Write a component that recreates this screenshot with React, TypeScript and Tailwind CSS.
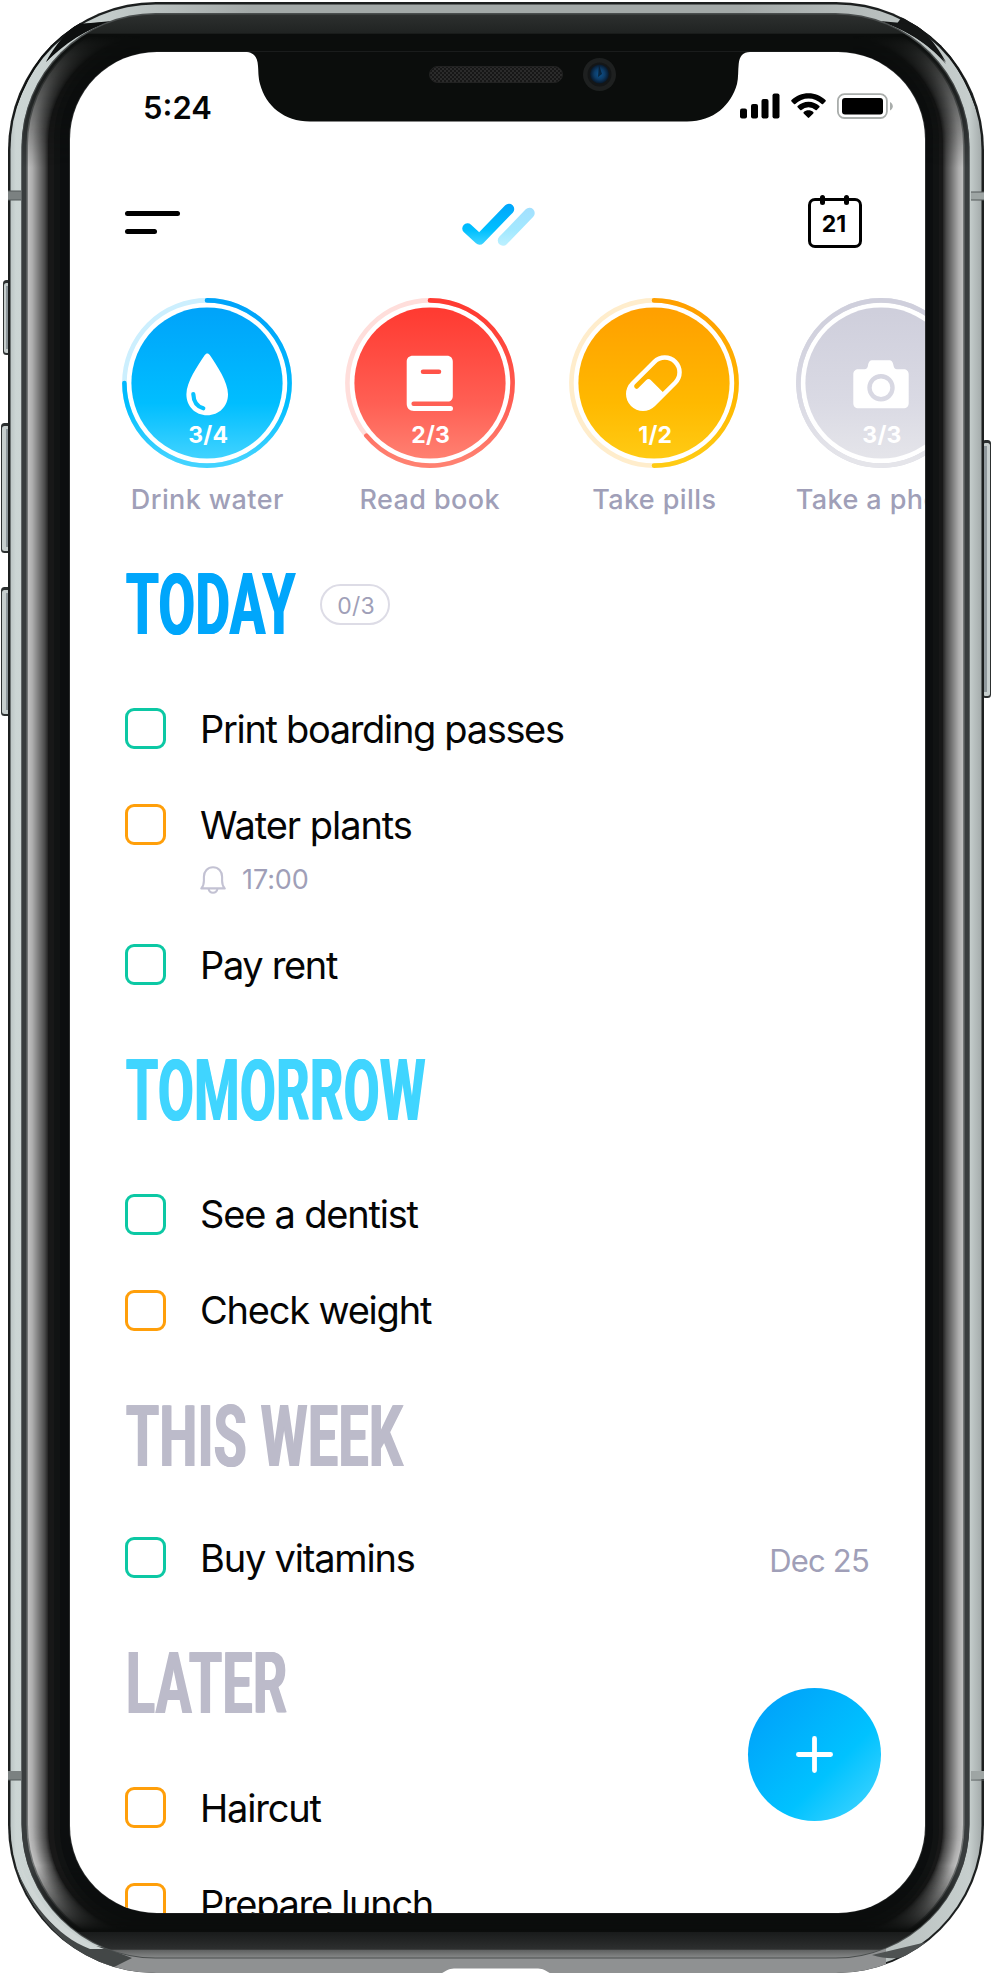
import React from "react";

type HabitProps = {
  id: string;
  label: string;
  count: string;
  progress: number;
  stops: [string, string, string];
  track: string;
  children: React.ReactNode;
};

function arc(progress: number) {
  const r = 82.6;
  const a = Math.min(progress, 0.9999) * 2 * Math.PI;
  const x = 85 + r * Math.sin(a);
  const y = 85 - r * Math.cos(a);
  return `M85 ${85 - r}A${r} ${r} 0 ${progress > 0.5 ? 1 : 0} 1 ${x} ${y}`;
}

function Habit({ id, label, count, progress, stops, track, children }: HabitProps) {
  return (
    <div className="flex w-[170px] shrink-0 flex-col items-center">
      <div className="relative flex h-[170px] w-[170px] items-end justify-center pb-[19px]">
        <svg className="absolute inset-0" width="170" height="170" viewBox="0 0 170 170" fill="none">
          <defs>
            <linearGradient id={id} gradientUnits="userSpaceOnUse" x1="0" y1="0" x2="0" y2="170">
              <stop offset="0.08" stopColor={stops[0]} />
              <stop offset="0.62" stopColor={stops[1]} />
              <stop offset="0.95" stopColor={stops[2]} />
            </linearGradient>
          </defs>
          <circle cx="85" cy="85" r="82.6" stroke={track} strokeWidth="4.6" />
          <path d={arc(progress)} stroke={`url(#${id})`} strokeWidth="4.6" strokeLinecap="round" />
          <circle cx="85" cy="85" r="75.6" fill={`url(#${id})`} />
          {children}
        </svg>
        <span className="relative left-[1px] text-[23px] leading-[28px] font-bold tracking-[0.2px] text-white">{count}</span>
      </div>
      <span className="mt-[14px] text-[27px] leading-[36px] font-medium tracking-[0.4px] whitespace-nowrap text-[#a09fb8]">
        {label}
      </span>
    </div>
  );
}

function Heading({ text, className, children }: { text: string; className: string; children?: React.ReactNode }) {
  return (
    <div className="flex items-start">
      <h2
        className={
          "ml-[1px] h-[61px] origin-left font-['Roboto'] text-[86px] leading-[63px] font-bold tracking-[0.8px] whitespace-nowrap [text-shadow:1.2px_0_0_currentColor,-1.2px_0_0_currentColor] " +
          className
        }
      >
        {text}
      </h2>
      {children}
    </div>
  );
}

function Task({
  text,
  color,
  className = "h-[96px]",
  tracking = "tracking-[-1.2px]",
  date,
  time,
}: {
  text: string;
  color: string;
  className?: string;
  tracking?: string;
  date?: string;
  time?: string;
}) {
  return (
    <li className={"flex items-start " + className}>
      <span className={"h-[41px] w-[41px] shrink-0 rounded-[9px] border-[3px] " + color} />
      <div className="ml-[34px] flex-1">
        <div className="flex h-[41px] items-center justify-between">
          <span className={"mt-[1px] text-[38px] leading-[41px] whitespace-nowrap text-[#050505] " + tracking}>{text}</span>
          {date && <span className="mt-[6px] mr-[56px] text-[31px] leading-[36px] tracking-[-0.8px] text-[#a09fb8]">{date}</span>}
        </div>
        {time && (
          <div className="mt-[19px] flex items-center gap-[16px] text-[27px] leading-[32px] text-[#a09fb8]">
            <svg width="26" height="28" viewBox="0 0 26 28" fill="none" stroke="#c3c2d3" strokeWidth="2.1" strokeLinejoin="round">
              <path d="M1.3 22.4c1.8-1.9 2.6-4 2.6-7.600v-4C3.900 5.100 7.600 1.300 13 1.300s9.100 3.800 9.100 9.500v4c0 3.600.8 5.700 2.600 7.600z" />
              <path d="M8.600 22.800c.4 2.400 2.100 3.900 4.400 3.900s4-1.500 4.400-3.900" />
            </svg>
            <span className="tracking-[-0.1px]">{time}</span>
          </div>
        )}
      </div>
    </li>
  );
}

const GREEN = "border-[#0cc8a4]";
const ORANGE = "border-[#ff9f0a]";

function mix(t: number) {
  const pts: [number, number][] = [
    [0, 190],
    [0.2, 172],
    [0.5, 124],
    [0.8, 76],
    [0.95, 42],
    [1, 24],
  ];
  for (let i = 1; i < pts.length; i++) {
    if (t <= pts[i][0]) {
      const k = (t - pts[i - 1][0]) / (pts[i][0] - pts[i - 1][0]);
      const v = Math.round(pts[i - 1][1] + k * (pts[i][1] - pts[i - 1][1]));
      return `rgb(${v},${v},${v})`;
    }
  }
  return "rgb(24,26,25)";
}

function SideButton({ x, y, w, h, flip }: { x: number; y: number; w: number; h: number; flip?: boolean }) {
  return (
    <g>
      <rect x={x} y={y} width={w} height={h} rx="3.500" fill="#2c3030" />
      <rect x={x + 1} y={y + 3} width={w - 2} height={h - 5} rx="2.500" fill="#c6cecd" />
      <rect x={flip ? x : x + w - 5} y={y + 6} width="5" height={h - 12} fill="#8f989c" />
    </g>
  );
}

function Device() {
  const steps = Array.from({ length: 21 }, (_, i) => i);
  return (
    <svg className="absolute inset-0" width="993" height="1974" viewBox="0 0 993 1974" fill="none" aria-hidden="true">
      <defs>
        <linearGradient id="rim" gradientUnits="userSpaceOnUse" x1="8" y1="0" x2="984" y2="0">
          <stop offset="0" stopColor="#b4bdbd" />
          <stop offset="0.008" stopColor="#ccd5d4" />
          <stop offset="0.1" stopColor="#c4cccb" />
          <stop offset="0.25" stopColor="#a3a9a8" />
          <stop offset="0.75" stopColor="#a3a9a8" />
          <stop offset="0.985" stopColor="#c6cecd" />
          <stop offset="1" stopColor="#9da4a4" />
        </linearGradient>
        <linearGradient id="glass" gradientUnits="userSpaceOnUse" x1="0" y1="14" x2="0" y2="1958">
          <stop offset="0" stopColor="#2d302f" />
          <stop offset="0.0100" stopColor="#202322" />
          <stop offset="0.0101" stopColor="#0b0d0c" />
          <stop offset="0.9865" stopColor="#0b0d0c" />
          <stop offset="0.9866" stopColor="#191b1b" />
          <stop offset="0.9955" stopColor="#2d2f2f" />
          <stop offset="0.996" stopColor="#606262" />
          <stop offset="1" stopColor="#888a8a" />
        </linearGradient>
        <linearGradient id="fade" gradientUnits="userSpaceOnUse" x1="0" y1="0" x2="0" y2="1974">
          <stop offset="0.018" stopColor="#000" />
          <stop offset="0.045" stopColor="#666" />
          <stop offset="0.085" stopColor="#fff" />
          <stop offset="0.945" stopColor="#fff" />
          <stop offset="0.978" stopColor="#000" />
        </linearGradient>
        <mask id="sides" maskUnits="userSpaceOnUse" x="0" y="0" width="993" height="1974">
          <rect width="993" height="1974" fill="url(#fade)" />
        </mask>
        <clipPath id="body">
          <rect x="8" y="2" width="976" height="1971" rx="148" />
        </clipPath>
        <radialGradient id="lens" cx="0.5" cy="0.5" r="0.5">
          <stop offset="0" stopColor="#0e5590" />
          <stop offset="0.55" stopColor="#0d3c68" />
          <stop offset="1" stopColor="#08182a" />
        </radialGradient>
        <pattern id="mesh" width="4" height="4" patternUnits="userSpaceOnUse">
          <rect width="4" height="4" fill="#2b2b2b" />
          <path d="M0 0h2v2H0zM2 2h2v2H2z" fill="#171717" />
        </pattern>
      </defs>
      <SideButton x={3} y={280} w={8} h={75} />
      <SideButton x={1} y={423} w={10} h={130} />
      <SideButton x={1} y={587} w={10} h={129} />
      <SideButton x={982} y={440} w={9} h={258} flip />
      <rect x="8" y="2" width="976" height="1971" rx="148" fill="#1c1f1f" />
      <rect x="10.500" y="4.500" width="971" height="1966.500" rx="145" fill="url(#rim)" />
      <g clipPath="url(#body)">
        <path d="M106 1940H886V1974H100z" fill="#8f9192" />
        <path d="M14 1862C32 1910 62 1943 103 1947L132 1958L112 1968C70 1955 30 1915 14 1862z" fill="#434747" />
        <path d="M19 1862C36 1904 66 1936 104 1949L90 1949C56 1936 30 1904 19 1862z" fill="#cfd6d5" />
        <path d="M872 1955L935 1940C912 1958 896 1962 872 1955z" fill="#4e5252" />
        <path d="M12 122C24 72 50 36 88 14L80 24L110 22C84 30 62 44 46 62C58 44 64 40 68 32C44 50 24 80 12 122z" fill="#0d0f0f" />
        <path d="M46 62C58 40 74 24 84 18L80 24L112 21C86 29 64 44 46 62z" fill="#0d0f0f" />
        <path d="M980 122C968 72 942 36 904 14L896 25L882 22C912 32 932 48 946 64C936 48 928 40 924 32C948 50 968 80 980 122z" fill="#141616" />
        <path d="M946 62C934 40 918 24 908 18L912 24L880 21C906 29 928 44 946 62z" fill="#141616" />
      </g>
      <rect x="21.500" y="13" width="948" height="1945.500" rx="134" fill="#4a4e4e" />
      <rect x="22.500" y="14.500" width="946" height="1943" rx="133" fill="url(#glass)" />
      <g mask="url(#sides)">
        <rect x="21.500" y="13" width="948" height="1945" rx="134" fill="#393d3e" />
        <rect x="26.500" y="17" width="938" height="1936" rx="128" fill="#747777" />
        {steps.map((s) => (
          <rect
            key={s}
            x={28 + s}
            y={18 + s * 0.85}
            width={935 - 2 * s}
            height={1934 - 1.7 * s}
            rx={127 - s}
            fill={mix(s / 20)}
          />
        ))}
        <rect x="54" y="38" width="885" height="1892" rx="101" fill="#111313" />
        <rect x="60" y="44" width="873" height="1880" rx="95" fill="#0c0e0f" />
      </g>
      <rect x="140" y="34" width="713" height="18" fill="#0b0d0c" />
      <path d="M8 191h13v9H8zM8 1771h13v9H8z" fill="#7b8181" />
      <path d="M971 192h13v8H971zM971 1771h13v8H971z" fill="#9ea5a4" />
      <path d="M8 191h13M8 200h13M971 192h13M971 200h13M8 1780h13M971 1780h13" stroke="#555b5b" />
      <path d="M436 1974C446 1974 444 1968.500 456 1968.500H536C548 1968.500 546 1974 556 1974z" fill="#fff" />
      <rect x="69" y="51.500" width="857" height="1862" rx="88" fill="#2a2c2c" />
    </svg>
  );
}

function Notch() {
  return (
    <svg className="absolute top-0 left-[172px]" width="510" height="70" viewBox="242 52 510 70" fill="none" aria-hidden="true">
      <path
        d="M242 52H245C254 52 257.500 57 258 66C258.500 71 258 76 260 84C266 106 284 121.500 310 121.500H687C714 121.500 731 105 737 84C738.500 78 738 70 738.700 64C739.500 56 743 52 750 52z"
        fill="#0b0d0c"
      />
      <rect x="429.500" y="66.500" width="133" height="16" rx="8" fill="url(#mesh)" stroke="#222" />
      <circle cx="599.500" cy="74.500" r="16.500" fill="#1e2020" />
      <circle cx="599.500" cy="74.500" r="12" fill="#141617" />
      <circle cx="599.500" cy="74" r="9.500" fill="url(#lens)" />
      <path d="M599 65l3 9-4 3z" fill="#071523" opacity="0.7" />
    </svg>
  );
}

export default function App() {
  return (
    <div className="relative h-[1974px] w-[993px] overflow-hidden bg-white pt-[52px] pl-[70px] font-['Inter','Liberation_Sans',sans-serif]">
      <Device />
      <main className="relative flex h-[1861px] w-[855px] flex-col overflow-hidden rounded-[87px] bg-white">
        <Notch />
        <div className="flex h-[108px] shrink-0 items-center justify-between pr-[32px] pl-[73px]">
          <span className="mt-[3px] text-[31px] leading-[36px] font-semibold text-[#050505]">5:24</span>
          <div className="flex items-center">
            <svg width="40" height="26" viewBox="0 0 40 26" fill="#000">
              <rect x="0" y="15.500" width="7" height="10" rx="2" />
              <rect x="11" y="11" width="7" height="14.500" rx="2" />
              <rect x="21.500" y="6" width="7" height="19.500" rx="2" />
              <rect x="32.500" y="0.500" width="7" height="25" rx="2" />
            </svg>
            <svg className="ml-[11px]" width="35" height="26" viewBox="0 0 35 26" fill="#000">
              <path d="M17.500 0.300c6.500 0 12.500 2.500 17 6.800.4.400.4.900 0 1.300L32 10.900c-.4.400-.9.400-1.300 0a19 19 0 0 0-26.400 0c-.4.400-.9.400-1.300 0L.5 8.400c-.4-.4-.4-.9 0-1.300 4.500-4.300 10.500-6.800 17-6.800z" />
              <path d="M17.500 8.700c4.200 0 8 1.600 10.900 4.300.4.400.4.900 0 1.300l-2.600 2.600c-.4.400-.9.400-1.300 0a10.400 10.400 0 0 0-14 0c-.4.400-.9.400-1.300 0l-2.600-2.600c-.4-.4-.4-.9 0-1.300 2.900-2.700 6.700-4.300 10.900-4.300z" />
              <path d="M17.500 17.300c1.800 0 3.500.6 4.800 1.800.4.400.4.900 0 1.300l-4.100 4.200c-.4.400-1 .4-1.400 0l-4.100-4.200c-.4-.4-.4-.9 0-1.300 1.300-1.200 3-1.800 4.800-1.800z" />
            </svg>
            <svg className="ml-[11px]" width="56" height="26" viewBox="0 0 56 26" fill="none">
              <rect x="0.900" y="1.200" width="49" height="23.800" rx="6.500" stroke="#a9adab" strokeWidth="1.800" />
              <rect x="5" y="5" width="41" height="16.500" rx="3" fill="#000" />
              <path d="M53 9v8.500c1.700-.7 2.800-2.300 2.800-4.200S54.700 9.700 53 9z" fill="#a9adab" />
            </svg>
          </div>
        </div>

        <header className="flex h-[124px] shrink-0 items-center justify-between pr-[63px] pl-[55px]">
          <div className="mt-[1px] flex w-[55px] flex-col gap-[13.500px]">
            <span className="h-[5px] w-[55px] rounded-full bg-black" />
            <span className="h-[5px] w-[32px] rounded-full bg-black" />
          </div>
          <svg className="mt-[5px] ml-[8px]" width="73" height="44" viewBox="0 0 73 44" fill="none">
            <defs>
              <linearGradient id="tick" gradientUnits="userSpaceOnUse" x1="0" y1="0" x2="0" y2="42">
                <stop offset="0" stopColor="#00a4fb" />
                <stop offset="0.65" stopColor="#00c0ff" />
                <stop offset="1" stopColor="#42d4ff" />
              </linearGradient>
            </defs>
            <path d="M41 37.500L67.500 10" stroke="url(#tick)" strokeOpacity="0.36" strokeWidth="10.500" strokeLinecap="round" />
            <path d="M5.500 25.500L17.500 36.500L47 6" stroke="url(#tick)" strokeWidth="10.500" strokeLinecap="round" strokeLinejoin="round" />
          </svg>
          <div className="relative mt-[1px] flex h-[50px] w-[54px] items-center justify-center rounded-[7px] border-[3px] border-black">
            <span className="absolute -top-[6px] left-[9px] h-[10px] w-[5px] rounded-full bg-black" />
            <span className="absolute -top-[6px] right-[10px] h-[10px] w-[5px] rounded-full bg-black" />
            <span className="mt-[2px] ml-[-2px] text-[23px] leading-[28px] font-bold text-black">21</span>
          </div>
        </header>

        <section className="flex h-[289px] shrink-0 items-start overflow-hidden pt-[13.500px] pl-[52.300px]">
          <Habit id="g-water" label="Drink water" count="3/4" progress={0.75} stops={["#00a4fa", "#00beff", "#42d3ff"]} track="#cceffe">
            <path
              d="M85.300 55.500c1 0 1.800.5 2.500 1.600C95 68 106 84 106 96.300 106 108.500 97 117.300 85.200 117.300S64.400 108.500 64.400 96.300C64.400 84 75.600 68 82.800 57.100c.7-1.100 1.500-1.600 2.500-1.600z"
              fill="#fff"
            />
            <path d="M71.300 96c.3 7.500 4 12.700 10 14.300" stroke="#09c2ff" strokeWidth="4.200" strokeLinecap="round" />
          </Habit>
          <div className="w-[52.400px] shrink-0" />
          <Habit id="g-book" label="Read book" count="2/3" progress={0.64} stops={["#ff3b32", "#ff5f54", "#ff8171"]} track="#ffdedb">
            <path
              fillRule="evenodd"
              d="M68 57.700H102c3.500 0 5.800 2.300 5.800 5.800V98c0 3.300-2 5.600-4.800 5.600H68.600a2.200 2.200 0 0 0 0 4.400H105.500a2.500 2.500 0 0 1 0 5H69c-4.600 0-7.300-2.900-7.300-7.500V63.700c0-3.700 2.300-6 6.300-6zM78 71.600a2.200 2.200 0 0 0 0 4.500H94a2.200 2.200 0 0 0 0-4.500z"
              fill="#fff"
            />
          </Habit>
          <div className="w-[54.600px] shrink-0" />
          <Habit id="g-pill" label="Take pills" count="1/2" progress={0.5} stops={["#ffa000", "#ffb900", "#ffcb14"]} track="#ffedcc">
            <path
              transform="translate(84.900 85.200) rotate(-45)"
              fillRule="evenodd"
              d="M-15.400-17H15.400a17 17 0 0 1 0 34H-15.400a17 17 0 0 1 0-34zM0 12.500H15.400a12.500 12.500 0 0 0 0-25H-14.500a2.500 2.500 0 0 0-.6 4.900H-3.500Q0-7.600 0-4.500z"
              fill="#fff"
            />
          </Habit>
          <div className="w-[56.700px] shrink-0" />
          <Habit id="g-photo" label="Take a photo" count="3/3" progress={1} stops={["#cfcfdc", "#dadae4", "#e5e5ea"]} track="#dddde5">
            <path
              fillRule="evenodd"
              d="M77 62.300H92.500c3.800 0 4.300 2 5 5.200.6 2.500 1.300 3.800 3.500 3.800H107.500c3.200 0 5.200 2 5.200 5V105.300c0 3-2 5-5.200 5H62.500c-3.200 0-5.200-2-5.200-5V76.300c0-3 2-5 5.200-5H68.500c2.200 0 2.900-1.300 3.500-3.800.7-3.200 1.200-5.200 5-5.200zM85 76a13.700 13.700 0 1 0 0 27.400a13.700 13.700 0 1 0 0-27.400zM85 80.400a9.300 9.300 0 1 1 0 18.600a9.300 9.300 0 1 1 0-18.600z"
              fill="#fff"
            />
          </Habit>
        </section>

        <div className="flex flex-col pl-[55px]">
          <section>
            <Heading text="TODAY" className="w-[194px] scale-x-[0.615] text-[#00a6fb]">
              <span className="mt-[11px] flex h-[41px] w-[70px] items-center justify-center rounded-full border-2 border-[#dddce6] pt-[3px] pl-[2px] text-[23px] tracking-[0.200px] text-[#a09fb8]">
                0/3
              </span>
            </Heading>
            <ul className="pt-[74px]">
              <Task text="Print boarding passes" color={GREEN} tracking="tracking-[-1.330px]" />
              <Task text="Water plants" color={ORANGE} time="17:00" className="h-[140px]" tracking="tracking-[-1.050px]" />
              <Task text="Pay rent" color={GREEN} className="h-[115px]" tracking="tracking-[-1.350px]" />
            </ul>
          </section>
          <section>
            <Heading text="TOMORROW" className="scale-x-[0.603] text-[#40d5ff]" />
            <ul className="pt-[73.500px]">
              <Task text="See a dentist" color={GREEN} />
              <Task text="Check weight" color={ORANGE} className="h-[115px]" />
            </ul>
          </section>
          <section>
            <Heading text="THIS WEEK" className="scale-x-[0.620] text-[#bcbbca]" />
            <ul className="pt-[71.500px]">
              <Task text="Buy vitamins" color={GREEN} date="Dec 25" className="h-[115px]" />
            </ul>
          </section>
          <section>
            <Heading text="LATER" className="scale-x-[0.620] text-[#bcbbca]" />
            <ul className="pt-[74px]">
              <Task text="Haircut" color={ORANGE} />
              <Task text="Prepare lunch" color={ORANGE} tracking="tracking-[-1.300px]" />
            </ul>
          </section>
        </div>

        <button
          aria-label="Add task"
          className="absolute right-[44px] bottom-[92px] flex h-[133px] w-[133px] items-center justify-center rounded-full bg-[linear-gradient(135deg,#00a3fa_12%,#00c2ff_62%,#38d1ff_90%)]"
        >
          <svg width="37" height="37" viewBox="0 0 37 37" stroke="#fff" strokeWidth="4.800" strokeLinecap="round">
            <path d="M18.500 2.400V34.600M2.400 18.500H34.600" />
          </svg>
        </button>
      </main>
    </div>
  );
}
